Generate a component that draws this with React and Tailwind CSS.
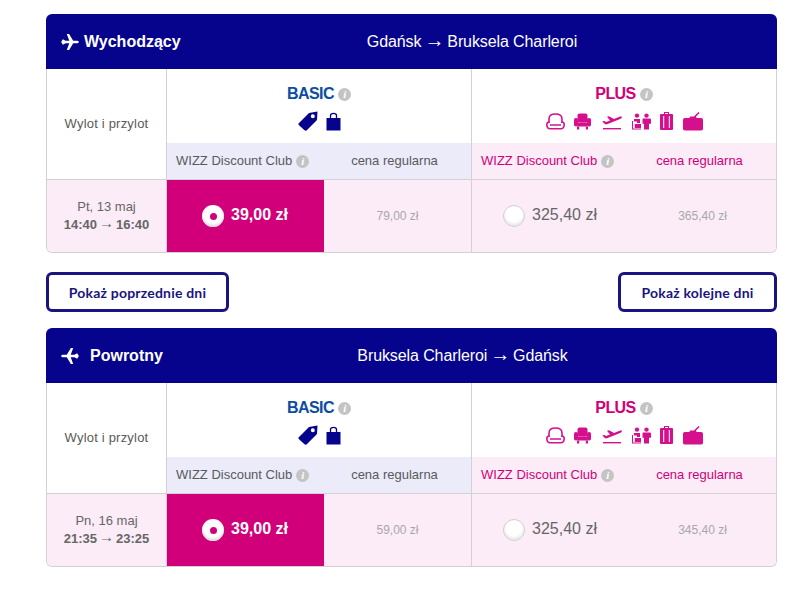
const plane = 'M0 9 L2 5.8 L5 7.6 L9.2 7.6 L6.4 0 L9 0 L13.6 7.6 L17.4 7.6 C19 7.6 20 8.3 20 9 C20 9.7 19 10.4 17.4 10.4 L13.6 10.4 L9 18 L6.4 18 L9.2 10.4 L5 10.4 L2 12.2 Z'

function Info() {
  return (
    <span className="inline-flex w-[13px] h-[13px] rounded-full bg-[#c4c4c4] text-white items-center justify-center text-[11px] font-bold italic leading-none font-['Liberation_Serif',serif] shrink-0">
      i
    </span>
  )
}

function Arrow({ size }) {
  return <span style={{ fontSize: size }} className="font-normal leading-none -translate-y-[2px]">→</span>
}

function PlaneRight() {
  return (
    <svg viewBox="0 0 20 18" className="w-[18px] h-[16px] fill-white">
      <path d={plane} />
    </svg>
  )
}

function PlaneLeft() {
  return (
    <svg viewBox="0 0 20 18" className="w-[18px] h-[16px] fill-white -scale-x-100">
      <path d={plane} />
    </svg>
  )
}

function BasicIcons() {
  return (
    <div className="flex items-center justify-center gap-[8px] h-[24px]">
      <svg viewBox="0 0 20 20" className="w-[20px] h-[20px] fill-[#06038d]">
        <path fillRule="evenodd" d="M0.5 12.5 L11 2 L19.5 0.5 L19 9 L8.5 19.5 Q7.5 20 6.5 19.2 L1 14.2 Q0 13.4 0.5 12.5 Z M14.8 3.2 A2 2 0 1 0 14.81 7.2 A2 2 0 1 0 14.8 3.2 Z" />
      </svg>
      <svg viewBox="0 0 15 19" className="w-[15px] h-[19px]">
        <path d="M4.5 7 V3.5 C4.5 0.6 10.5 0.6 10.5 3.5 V7" fill="none" stroke="#06038d" strokeWidth="1.3" />
        <path d="M0.5 6 H14.5 V18.5 H0.5 Z" fill="#06038d" />
      </svg>
    </div>
  )
}

function PlusIcons() {
  const c = '#d5108c'
  return (
    <div className="flex items-center justify-center h-[24px]">
      <svg viewBox="0 0 19 17" className="w-[19px] h-[17px]" fill="none" stroke={c} strokeWidth="1.6">
        <path d="M3 10 V6 C3 2 6 1 9.5 1 C13 1 16 2 16 6 V10" />
        <path d="M3.5 9.5 C1 8.5 0.6 11 1 13 C1.3 15 2.5 15.7 4 15.7 H15 C16.5 15.7 17.7 15 18 13 C18.4 11 18 8.5 15.5 9.5" />
        <path d="M4 12 H15" />
      </svg>
      <svg viewBox="0 0 17 17" className="w-[17px] h-[17px] ml-[9px]" fill={c}>
        <rect x="3.5" y="0.5" width="10" height="9" rx="2" />
        <rect x="0" y="5" width="4" height="8.5" rx="1.8" />
        <rect x="13" y="5" width="4" height="8.5" rx="1.8" />
        <rect x="3.5" y="9.5" width="10" height="4" />
        <rect x="3" y="13.5" width="2.2" height="3" />
        <rect x="11.8" y="13.5" width="2.2" height="3" />
      </svg>
      <svg viewBox="0 0 20 17" className="w-[20px] h-[17px] ml-[11px]" fill={c}>
        <path d="M0.5 8.5 L2 7.8 L4 9 L8 7.5 L5 3.8 L7 3.2 L12 6 L17 4 C18.5 3.4 19.8 3.4 20 4 C20 4.8 19 5.5 17.5 6.2 L5 11.3 C4 11.6 3.2 11.4 2.5 10.8 Z" />
        <rect x="1" y="15" width="18" height="1.4" />
      </svg>
      <svg viewBox="0 0 19 17" className="w-[19px] h-[17px] ml-[10px]" fill={c}>
        <circle cx="5" cy="2.6" r="2.2" />
        <path d="M2 6 H8 V10 H5 V8.6 H2 Z" />
        <path d="M0 8 H1 V16.5 H0 Z M1 15.6 H9 V16.5 H1 Z M2.8 11 H9 V15 H2.8 Z" />
        <circle cx="14.5" cy="2.6" r="2.2" />
        <path d="M11 5.6 H18 Q19 5.6 19 7 V10.8 H17 V16.5 H12 V10.8 H10.5 V7 Q10.5 5.6 11 5.6 Z" />
      </svg>
      <svg viewBox="0 0 13 20" className="w-[13px] h-[20px] ml-[9px]" fill={c}>
        <path d="M4 3 V1 H9 V3 H8 V2 H5 V3 Z" />
        <path fillRule="evenodd" d="M1 3 H12 Q13 3 13 4 V18 Q13 19 12 19 H1 Q0 19 0 18 V4 Q0 3 1 3 Z M3.2 5 V17 H4.2 V5 Z M8.8 5 V17 H9.8 V5 Z" />
      </svg>
      <svg viewBox="0 0 20 20" className="w-[20px] h-[20px] ml-[10px]" fill={c}>
        <path d="M11.5 6 L16 1.5" stroke={c} strokeWidth="1.6" fill="none" />
        <path d="M6 8 L7 5.5 H13 L14 8 Z" />
        <rect x="0" y="7" width="20" height="12.5" rx="1.8" />
      </svg>
    </div>
  )
}

function Radio({ checked }) {
  if (checked) {
    return (
      <span className="w-[22px] h-[22px] rounded-full bg-white shadow-[inset_0_-2px_3px_#d8d8d8] flex items-center justify-center shrink-0">
        <span className="w-[7px] h-[7px] rounded-full bg-[#d1007a]" />
      </span>
    )
  }
  return <span className="w-[22px] h-[22px] rounded-full bg-white border border-[#cfcfcf] shadow-[inset_0_-2px_3px_#e6e6e6] shrink-0" />
}

function FlightCard({ icon, title, titleClass, route, routeClass, date, time, basicOld, plusOld }) {
  return (
    <section className="w-[731px]">
      <header className="h-[55px] bg-[#06038d] rounded-t-[6px] flex items-center text-white relative">
        <div className={`flex items-center font-bold text-[16px] ${titleClass}`}>
          {icon}
          <span>{title}</span>
        </div>
        <div className={`absolute left-[121px] right-0 text-[16px] tracking-[-0.1px] flex items-center justify-center gap-[3px] ${routeClass}`}>
          {route}
        </div>
      </header>
      <div className="grid grid-cols-[120px_305px_304px] border-x border-b border-[#d2d2d2] rounded-b-[6px] overflow-hidden text-[#555]">
        <div className="h-[110px] border-r border-[#d2d2d2] flex items-center justify-center text-[13px] tracking-[0.2px] text-[#5a5a5a] bg-white">
          Wylot i przylot
        </div>
        <div className="h-[110px] flex flex-col bg-white border-r border-[#d2d2d2]">
          <div className="h-[74px] flex flex-col items-center pt-[15px]">
            <div className="flex items-center gap-[4px] text-[16px] font-bold text-[#0c4da2] leading-[20px] tracking-[-0.6px]">
              BASIC <Info />
            </div>
            <div className="mt-[5px]"><BasicIcons /></div>
          </div>
          <div className="h-[36px] bg-[#ebebfa] flex items-center text-[13px] text-[#5a5a5a]">
            <div className="w-[157px] pl-[9px] flex items-center gap-[4px] whitespace-nowrap">
              WIZZ Discount Club <Info />
            </div>
            <div className="flex-1 text-center pr-[6px]">cena regularna</div>
          </div>
        </div>
        <div className="h-[110px] flex flex-col bg-white">
          <div className="h-[74px] flex flex-col items-center pt-[15px]">
            <div className="flex items-center gap-[4px] text-[16px] font-bold text-[#d1007a] leading-[20px] tracking-[-0.6px]">
              PLUS <Info />
            </div>
            <div className="mt-[5px]"><PlusIcons /></div>
          </div>
          <div className="h-[36px] bg-[#fcecf7] flex items-center text-[13px] text-[#d1007a]">
            <div className="w-[157px] pl-[9px] flex items-center gap-[4px] whitespace-nowrap">
              WIZZ Discount Club <Info />
            </div>
            <div className="flex-1 text-center pr-[6px]">cena regularna</div>
          </div>
        </div>
        <div className="h-[73px] border-t border-r border-[#d2d2d2] bg-[#fcecf7] flex flex-col items-center justify-center text-[13px] leading-[18px] text-[#666] pb-[1px]">
          <span>{date}</span>
          <span className="font-bold flex items-center gap-[2px]">{time[0]} <Arrow size={15} /> {time[1]}</span>
        </div>
        <div className="h-[73px] border-t border-r border-[#d2d2d2] bg-[#fcecf7] flex">
          <div className="w-[157px] bg-[#d1007a] flex items-center pl-[35px] gap-[7px] text-white font-bold text-[16px]">
            <Radio checked />
            <span className="-mt-[3px]">39,00 zł</span>
          </div>
          <div className="flex-1 flex items-center justify-center text-[12px] text-[#a8a8a8]">
            {basicOld}
          </div>
        </div>
        <div className="h-[73px] border-t border-[#d2d2d2] bg-[#fcecf7] flex">
          <div className="w-[157px] flex items-center pl-[31px] gap-[7px] text-[16px] text-[#666]">
            <Radio />
            <span className="-mt-[3px]">325,40 zł</span>
          </div>
          <div className="flex-1 flex items-center justify-center text-[12px] text-[#a8a8a8]">
            {plusOld}
          </div>
        </div>
      </div>
    </section>
  )
}

function DayButton({ children, width }) {
  return (
    <button className={`h-[40px] ${width} rounded-[6px] border-[3px] border-[#1a1480] bg-white text-[14px] tracking-[0.2px] font-bold text-[#1a1480] font-['Lato',sans-serif]`}>
      {children}
    </button>
  )
}

export default function App() {
  return (
    <div className="w-[789px] h-[614px] bg-white overflow-hidden pt-[14px] pl-[46px] font-['Liberation_Sans',Arial,sans-serif]">
      <FlightCard
        icon={<PlaneRight />}
        title="Wychodzący"
        titleClass="pl-[15px] gap-[5px]"
        route={<>Gdańsk <Arrow size={20} /> Bruksela Charleroi</>}
        routeClass=""
        date="Pt, 13 maj"
        time={['14:40', '16:40']}
        basicOld="79,00 zł"
        plusOld="365,40 zł"
      />
      <div className="w-[731px] flex justify-between mt-[19px] mb-[16px]">
        <DayButton width="w-[183px]">Pokaż poprzednie dni</DayButton>
        <DayButton width="w-[159px]">Pokaż kolejne dni</DayButton>
      </div>
      <FlightCard
        icon={<PlaneLeft />}
        title="Powrotny"
        titleClass="pl-[15px] gap-[11px]"
        route={<>Bruksela Charleroi <Arrow size={20} /> Gdańsk</>}
        routeClass="pr-[19px]"
        date="Pn, 16 maj"
        time={['21:35', '23:25']}
        basicOld="59,00 zł"
        plusOld="345,40 zł"
      />
    </div>
  )
}
